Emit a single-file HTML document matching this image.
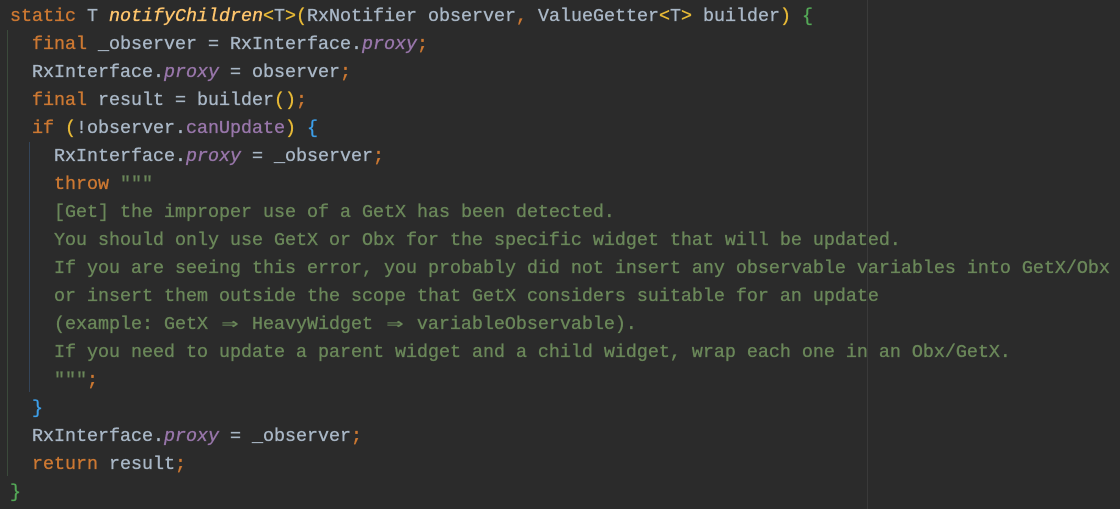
<!DOCTYPE html>
<html><head><meta charset="utf-8"><style>
html,body{margin:0;padding:0;background:#2b2b2b;width:1120px;height:509px;overflow:hidden}
.c{position:absolute;left:10px;top:3px;font-family:"Liberation Mono","DejaVu Sans Mono",monospace;font-size:18.33px;line-height:28px;color:#a9b7c6;white-space:pre;-webkit-text-stroke:0.35px currentColor}
.k{color:#cc7832}.s{color:#6a8759}.p{color:#9876aa;font-style:italic}.f{color:#ffc66d;font-style:italic}
.y{color:#e8ba36}.b{color:#3d9ee8}.g{color:#54a857}.m{color:#9876aa}
.a{display:inline-block;width:2ch;text-align:center;transform:scaleX(1.5)}
.v{position:absolute;width:1px}
</style></head><body>
<div class="v" style="left:867px;top:0;height:509px;background:#3a3a3a"></div>
<div class="v" style="left:7px;top:30px;height:446px;background:#3b4a3b"></div>
<div class="v" style="left:29px;top:142px;height:250px;background:#34455a"></div>
<div class="c"><span class="k">static</span> T <span class="f">notifyChildren</span><span class="y">&lt;</span>T<span class="y">&gt;(</span>RxNotifier observer<span class="k">,</span> ValueGetter<span class="y">&lt;</span>T<span class="y">&gt;</span> builder<span class="y">)</span> <span class="g">{</span>
  <span class="k">final</span> _observer = RxInterface.<span class="p">proxy</span><span class="k">;</span>
  RxInterface.<span class="p">proxy</span> = observer<span class="k">;</span>
  <span class="k">final</span> result = builder<span class="y">()</span><span class="k">;</span>
  <span class="k">if</span> <span class="y">(</span>!observer.<span class="m">canUpdate</span><span class="y">)</span> <span class="b">{</span>
    RxInterface.<span class="p">proxy</span> = _observer<span class="k">;</span>
    <span class="k">throw</span> <span class="s">"""</span>
<span class="s">    [Get] the improper use of a GetX has been detected.
    You should only use GetX or Obx for the specific widget that will be updated.
    If you are seeing this error, you probably did not insert any observable variables into GetX/Obx
    or insert them outside the scope that GetX considers suitable for an update
    (example: GetX <span class="a">⇒</span> HeavyWidget <span class="a">⇒</span> variableObservable).
    If you need to update a parent widget and a child widget, wrap each one in an Obx/GetX.
    """</span><span class="k">;</span>
  <span class="b">}</span>
  RxInterface.<span class="p">proxy</span> = _observer<span class="k">;</span>
  <span class="k">return</span> result<span class="k">;</span>
<span class="g">}</span></div>
</body></html>
